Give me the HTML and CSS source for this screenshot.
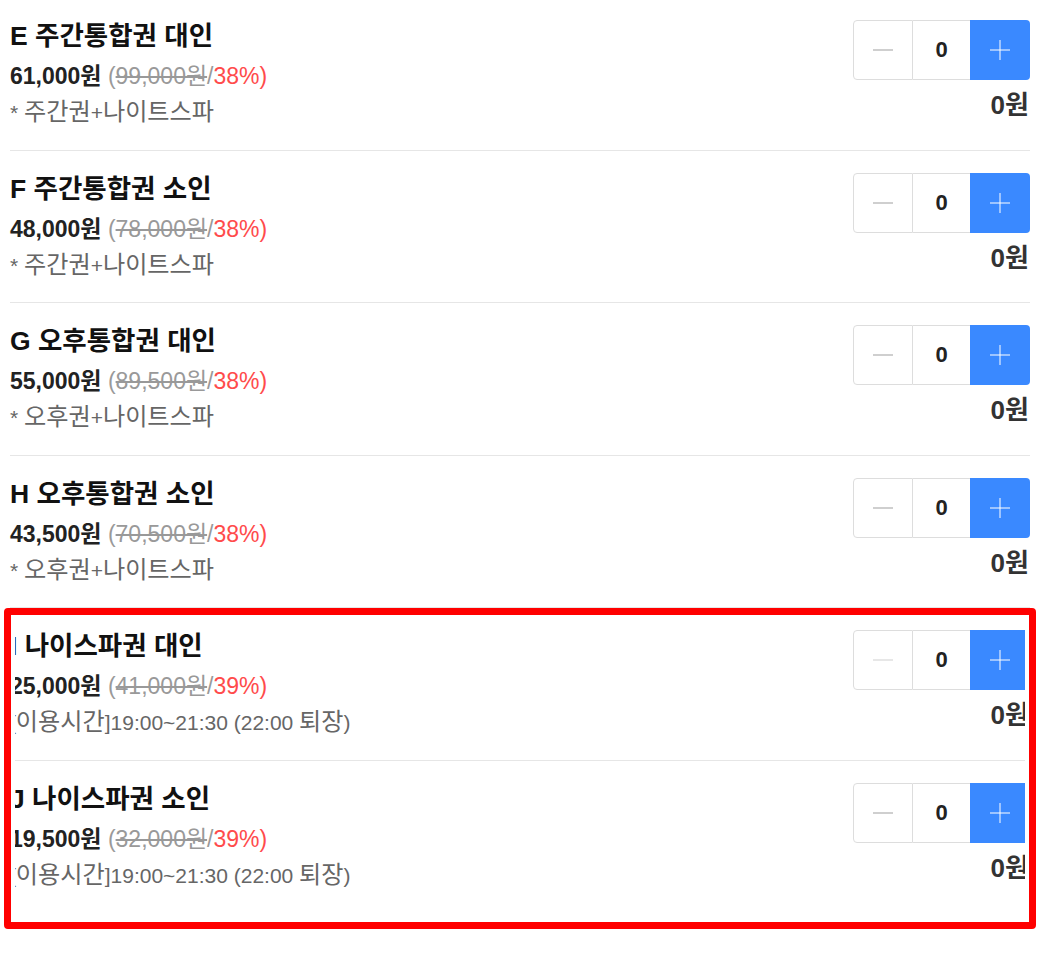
FILE: index.html
```html
<!DOCTYPE html>
<html lang="ko">
<head>
<meta charset="utf-8">
<title>티켓 선택</title>
<link rel="stylesheet" href="styles.css">
</head>
<body>
<div class="list">
  <div class="item">
    <div class="info">
      <div class="name">E 주간통합권 대인</div>
      <div class="price"><strong class="sale">61,000원</strong> <span class="orig">(<s>99,000원</s>/<span class="rate">38%)</span></span></div>
      <div class="desc">* <span class="k">주간권</span>+<span class="k">나이트스파</span></div>
    </div>
    <div class="side">
      <div class="stepper">
        <button class="btn minus" type="button"><svg width="20" height="4" viewBox="0 0 20 4"><rect x="0" y="1" width="20" height="2" fill="#cfcfcf"/></svg></button>
        <span class="qty">0</span>
        <button class="btn plus" type="button"><svg width="20" height="20" viewBox="0 0 20 20"><rect x="0" y="9.5" width="20" height="1" fill="#fff"/><rect x="9.5" y="0" width="1" height="20" fill="#fff"/></svg></button>
      </div>
      <div class="total">0원</div>
    </div>
  </div>

  <div class="item">
    <div class="info">
      <div class="name">F 주간통합권 소인</div>
      <div class="price"><strong class="sale">48,000원</strong> <span class="orig">(<s>78,000원</s>/<span class="rate">38%)</span></span></div>
      <div class="desc">* <span class="k">주간권</span>+<span class="k">나이트스파</span></div>
    </div>
    <div class="side">
      <div class="stepper">
        <button class="btn minus" type="button"><svg width="20" height="4" viewBox="0 0 20 4"><rect x="0" y="1" width="20" height="2" fill="#cfcfcf"/></svg></button>
        <span class="qty">0</span>
        <button class="btn plus" type="button"><svg width="20" height="20" viewBox="0 0 20 20"><rect x="0" y="9.5" width="20" height="1" fill="#fff"/><rect x="9.5" y="0" width="1" height="20" fill="#fff"/></svg></button>
      </div>
      <div class="total">0원</div>
    </div>
  </div>

  <div class="item">
    <div class="info">
      <div class="name">G 오후통합권 대인</div>
      <div class="price"><strong class="sale">55,000원</strong> <span class="orig">(<s>89,500원</s>/<span class="rate">38%)</span></span></div>
      <div class="desc">* <span class="k">오후권</span>+<span class="k">나이트스파</span></div>
    </div>
    <div class="side">
      <div class="stepper">
        <button class="btn minus" type="button"><svg width="20" height="4" viewBox="0 0 20 4"><rect x="0" y="1" width="20" height="2" fill="#cfcfcf"/></svg></button>
        <span class="qty">0</span>
        <button class="btn plus" type="button"><svg width="20" height="20" viewBox="0 0 20 20"><rect x="0" y="9.5" width="20" height="1" fill="#fff"/><rect x="9.5" y="0" width="1" height="20" fill="#fff"/></svg></button>
      </div>
      <div class="total">0원</div>
    </div>
  </div>

  <div class="item">
    <div class="info">
      <div class="name">H 오후통합권 소인</div>
      <div class="price"><strong class="sale">43,500원</strong> <span class="orig">(<s>70,500원</s>/<span class="rate">38%)</span></span></div>
      <div class="desc">* <span class="k">오후권</span>+<span class="k">나이트스파</span></div>
    </div>
    <div class="side">
      <div class="stepper">
        <button class="btn minus" type="button"><svg width="20" height="4" viewBox="0 0 20 4"><rect x="0" y="1" width="20" height="2" fill="#cfcfcf"/></svg></button>
        <span class="qty">0</span>
        <button class="btn plus" type="button"><svg width="20" height="20" viewBox="0 0 20 20"><rect x="0" y="9.5" width="20" height="1" fill="#fff"/><rect x="9.5" y="0" width="1" height="20" fill="#fff"/></svg></button>
      </div>
      <div class="total">0원</div>
    </div>
  </div>

  <div class="highlight">
    <div class="clip">
      <div class="item">
        <div class="info">
          <div class="name">I 나이스파권 대인</div>
          <div class="price"><strong class="sale">25,000원</strong> <span class="orig">(<s>41,000원</s>/<span class="rate">39%)</span></span></div>
          <div class="desc">[<span class="k">이용시간</span>]19:00~21:30 (22:00 <span class="k">퇴장</span>)</div>
        </div>
        <div class="side">
          <div class="stepper">
            <button class="btn minus" type="button"><svg width="20" height="4" viewBox="0 0 20 4"><rect x="0" y="1.5" width="20" height="1" fill="#cfcfcf"/></svg></button>
            <span class="qty">0</span>
            <button class="btn plus" type="button"><svg width="20" height="20" viewBox="0 0 20 20"><rect x="0" y="9.5" width="20" height="1" fill="#fff"/><rect x="9.5" y="0" width="1" height="20" fill="#fff"/></svg></button>
          </div>
          <div class="total">0원</div>
        </div>
      </div>

      <div class="item last">
        <div class="info">
          <div class="name">J 나이스파권 소인</div>
          <div class="price"><strong class="sale">19,500원</strong> <span class="orig">(<s>32,000원</s>/<span class="rate">39%)</span></span></div>
          <div class="desc">[<span class="k">이용시간</span>]19:00~21:30 (22:00 <span class="k">퇴장</span>)</div>
        </div>
        <div class="side">
          <div class="stepper">
            <button class="btn minus" type="button"><svg width="20" height="4" viewBox="0 0 20 4"><rect x="0" y="1" width="20" height="2" fill="#cfcfcf"/></svg></button>
            <span class="qty">0</span>
            <button class="btn plus" type="button"><svg width="20" height="20" viewBox="0 0 20 20"><rect x="0" y="9.5" width="20" height="1" fill="#fff"/><rect x="9.5" y="0" width="1" height="20" fill="#fff"/></svg></button>
          </div>
          <div class="total">0원</div>
        </div>
      </div>
    </div>
  </div>
</div>
</body>
</html>
```

FILE: styles.css
```css
html, body {
  margin: 0;
  padding: 0;
  background: #fff;
}

body {
  font-family: "Liberation Sans", "Noto Sans CJK KR", sans-serif;
  color: #111;
}

.list {
  padding: 0 10px;
  margin-top: -2px;
}

.item {
  display: flex;
  justify-content: space-between;
  align-items: flex-start;
  padding: 22px 0 23.6px;
  border-bottom: 1px solid #e6e6e6;
}

.item.last {
  border-bottom: none;
}

.info {
  display: flex;
  flex-direction: column;
}

.name {
  height: 31px;
  font-size: 26.5px;
  font-weight: bold;
  line-height: 32px;
  color: #111;
  white-space: nowrap;
}

.price {
  height: 30px;
  margin-top: 10px;
  font-size: 23px;
  line-height: 30px;
  white-space: nowrap;
}

.sale {
  font-weight: bold;
  color: #222;
}

.orig {
  color: #999;
}

.orig s {
  text-decoration: line-through;
}

.rate {
  color: #ff4b4b;
}

.desc {
  height: 30px;
  margin-top: 5px;
  font-size: 21px;
  line-height: 31px;
  color: #666;
  white-space: nowrap;
}

.desc .k {
  font-size: 1.15em;
}

.side {
  display: flex;
  flex-direction: column;
  align-items: flex-end;
  width: 177px;
}

.stepper {
  display: flex;
  height: 60px;
  width: 177px;
}

.btn {
  border: none;
  padding: 0;
  margin: 0;
  display: flex;
  align-items: center;
  justify-content: center;
  cursor: pointer;
}

.minus {
  width: 60px;
  height: 60px;
  box-sizing: border-box;
  background: #fff;
  border: 1px solid #ddd;
  border-radius: 4px 0 0 4px;
}

.qty {
  width: 57px;
  height: 60px;
  box-sizing: border-box;
  border-top: 1px solid #ddd;
  border-bottom: 1px solid #ddd;
  display: flex;
  align-items: center;
  justify-content: center;
  font-size: 22px;
  font-weight: bold;
  color: #222;
}

.plus {
  width: 60px;
  height: 60px;
  background: #3a89ff;
  border-radius: 0 4px 4px 0;
}

.total {
  margin-top: 10px;
  margin-right: 1px;
  font-size: 26px;
  line-height: 30px;
  font-weight: bold;
  color: #333;
}

.highlight {
  position: relative;
  padding-bottom: 16px;
}

.clip {
  clip-path: inset(0 5px 0 5px);
}

.highlight::after {
  content: "";
  position: absolute;
  top: 0;
  left: -6px;
  right: -6px;
  bottom: 0;
  border: 7px solid #ff0000;
  border-radius: 4px;
  pointer-events: none;
}
```
